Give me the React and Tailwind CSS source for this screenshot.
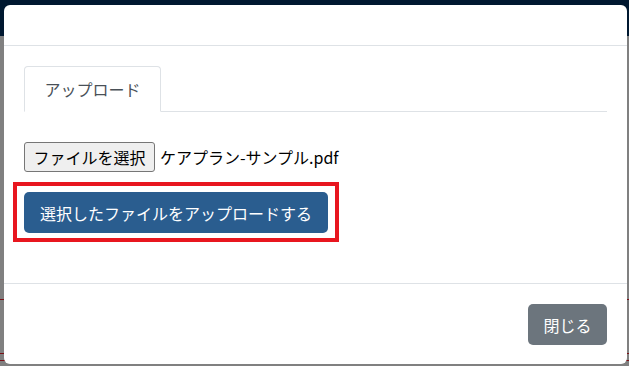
export default function App() {
  const font = { fontFamily: '"Noto Sans CJK JP", "Noto Sans", sans-serif' };
  return (
    <div className="relative w-[629px] h-[366px] overflow-hidden bg-[#808080]" style={font}>
      {/* dimmed page underneath */}
      <div className="h-[36px] bg-[#001830]" />
      <div className="flex flex-col">
        <div className="h-[263px]" />
        <div className="h-px bg-[#7a1016]" />
        <div className="h-[53px]" />
        <div className="h-px bg-[#7a1016]" />
        <div className="h-[6px]" />
        <div className="h-px bg-[#7a1016]" />
      </div>

      {/* modal */}
      <div className="absolute left-[4px] top-[5px] w-[623px] h-[359px] bg-white rounded-[6px] flex flex-col overflow-hidden">
        <div className="h-[41px] border-b border-[#dee2e6]" />
        <div className="flex-1 px-[20px] pt-[20px]">
          <div className="flex h-[46px] border-b border-[#dee2e6] w-[583px]">
            <div className="mb-[-1px] h-[46px] w-[137px] flex items-center justify-center border border-[#dee2e6] border-b-white rounded-t-[4px] bg-white text-[16px] text-[#495057] leading-none">
              アップロード
            </div>
          </div>
          <div className="mt-[30px] flex items-center h-[30px]">
            <div className="h-[30px] w-[131px] flex items-center justify-center bg-[#efefef] border border-[#767676] rounded-[3px] text-[16px] text-black leading-none">
              ファイルを選択
            </div>
            <span className="ml-[5px] text-[16px] text-black leading-none">ケアプラン-サンプル.pdf</span>
          </div>
          <div className="mt-[10px] ml-[-11px] w-[326px] h-[60px] border-[4px] border-[#e8161f] pl-[7px] pt-[6px]">
            <div className="w-[304px] h-[41px] rounded-[5px] bg-[#2a5d8f] flex items-center justify-center text-white text-[16px] leading-none">
              選択したファイルをアップロードする
            </div>
          </div>
        </div>
        <div className="h-[81px] border-t border-[#dee2e6] flex justify-end items-start pt-[20px] pr-[20px]">
          <div className="w-[79px] h-[41px] rounded-[5px] bg-[#6c757d] text-white text-[16px] flex items-center justify-center leading-none">
            閉じる
          </div>
        </div>
      </div>
    </div>
  );
}
